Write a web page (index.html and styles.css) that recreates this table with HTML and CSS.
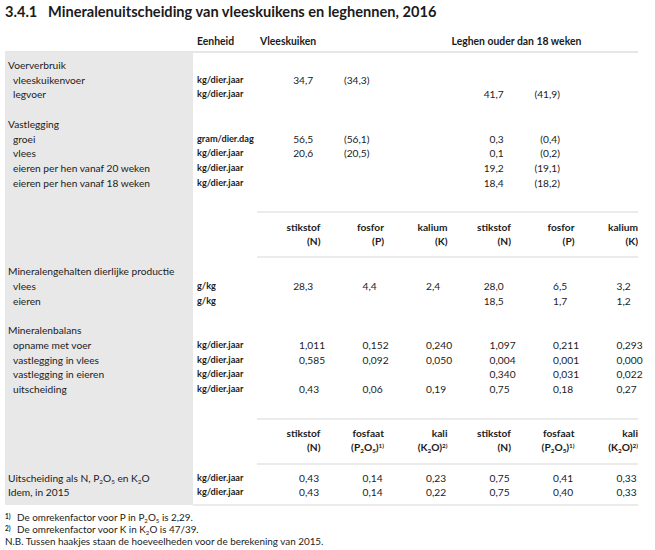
FILE: index.html
```
<!DOCTYPE html>
<html lang="nl">
<head>
<meta charset="utf-8">
<title>Mineralenuitscheiding</title>
<link rel="stylesheet" href="styles.css">
</head>
<body>
<div class="page">
  <h1 class="title"><span class="num">3.4.1</span>Mineralenuitscheiding van vleeskuikens en leghennen, 2016</h1>
  <table class="t">
    <colgroup>
      <col class="w-label"><col class="w-unit">
      <col class="w-d"><col class="w-d"><col class="w-d"><col class="w-d"><col class="w-d"><col class="w-d">
    </colgroup>
    <thead>
      <tr class="top">
        <th></th>
        <th class="th-unit">Eenheid</th>
        <th class="th-grp" colspan="3">Vleeskuiken</th>
        <th class="th-grp2" colspan="3">Leghen ouder dan 18 weken</th>
      </tr>
    </thead>
    <tbody>
      <tr class="sp6"><td class="lb"></td><td colspan="7"></td></tr>
      <tr><td class="lb">Voerverbruik</td><td></td><td></td><td></td><td></td><td></td><td></td><td></td></tr>
      <tr><td class="lb in">vleeskuikenvoer</td><td class="u">kg/dier.jaar</td><td class="n"><span class="i">34</span>,7</td><td class="n p"><span class="i">(34</span>,3)</td><td></td><td></td><td></td><td></td></tr>
      <tr><td class="lb in">legvoer</td><td class="u">kg/dier.jaar</td><td></td><td></td><td></td><td class="n"><span class="i">41</span>,7</td><td class="n p"><span class="i">(41</span>,9)</td><td></td></tr>
      <tr><td class="lb"></td><td colspan="7"></td></tr>
      <tr><td class="lb">Vastlegging</td><td colspan="7"></td></tr>
      <tr><td class="lb in">groei</td><td class="u">gram/dier.dag</td><td class="n"><span class="i">56</span>,5</td><td class="n p"><span class="i">(56</span>,1)</td><td></td><td class="n"><span class="i">0</span>,3</td><td class="n p"><span class="i">(0</span>,4)</td><td></td></tr>
      <tr><td class="lb in">vlees</td><td class="u">kg/dier.jaar</td><td class="n"><span class="i">20</span>,6</td><td class="n p"><span class="i">(20</span>,5)</td><td></td><td class="n"><span class="i">0</span>,1</td><td class="n p"><span class="i">(0</span>,2)</td><td></td></tr>
      <tr><td class="lb in">eieren per hen vanaf 20 weken</td><td class="u">kg/dier.jaar</td><td></td><td></td><td></td><td class="n"><span class="i">19</span>,2</td><td class="n p"><span class="i">(19</span>,1)</td><td></td></tr>
      <tr><td class="lb in">eieren per hen vanaf 18 weken</td><td class="u">kg/dier.jaar</td><td></td><td></td><td></td><td class="n"><span class="i">18</span>,4</td><td class="n p"><span class="i">(18</span>,2)</td><td></td></tr>
      <tr class="gap"><td class="lb"></td><td colspan="7"></td></tr>

      <tr class="sh">
        <td class="lb"></td><td></td>
        <td class="h">stikstof<br>(N)</td>
        <td class="h">fosfor<br>(P)</td>
        <td class="h">kalium<br>(K)</td>
        <td class="h">stikstof<br>(N)</td>
        <td class="h">fosfor<br>(P)</td>
        <td class="h">kalium<br>(K)</td>
      </tr>
      <tr class="sp7"><td class="lb"></td><td colspan="7"></td></tr>
      <tr><td class="lb">Mineralengehalten dierlijke productie</td><td colspan="7"></td></tr>
      <tr><td class="lb in">vlees</td><td class="u">g/kg</td><td class="n"><span class="i">28</span>,3</td><td class="n"><span class="i">4</span>,4</td><td class="n"><span class="i">2</span>,4</td><td class="n"><span class="i">28</span>,0</td><td class="n"><span class="i">6</span>,5</td><td class="n"><span class="i">3</span>,2</td></tr>
      <tr><td class="lb in">eieren</td><td class="u">g/kg</td><td></td><td></td><td></td><td class="n"><span class="i">18</span>,5</td><td class="n"><span class="i">1</span>,7</td><td class="n"><span class="i">1</span>,2</td></tr>
      <tr><td class="lb"></td><td colspan="7"></td></tr>
      <tr><td class="lb">Mineralenbalans</td><td colspan="7"></td></tr>
      <tr><td class="lb in">opname met voer</td><td class="u">kg/dier.jaar</td><td class="n"><span class="i">1</span>,011</td><td class="n"><span class="i">0</span>,152</td><td class="n"><span class="i">0</span>,240</td><td class="n"><span class="i">1</span>,097</td><td class="n"><span class="i">0</span>,211</td><td class="n"><span class="i">0</span>,293</td></tr>
      <tr><td class="lb in">vastlegging in vlees</td><td class="u">kg/dier.jaar</td><td class="n"><span class="i">0</span>,585</td><td class="n"><span class="i">0</span>,092</td><td class="n"><span class="i">0</span>,050</td><td class="n"><span class="i">0</span>,004</td><td class="n"><span class="i">0</span>,001</td><td class="n"><span class="i">0</span>,000</td></tr>
      <tr><td class="lb in">vastlegging in eieren</td><td class="u">kg/dier.jaar</td><td></td><td></td><td></td><td class="n"><span class="i">0</span>,340</td><td class="n"><span class="i">0</span>,031</td><td class="n"><span class="i">0</span>,022</td></tr>
      <tr><td class="lb in">uitscheiding</td><td class="u">kg/dier.jaar</td><td class="n"><span class="i">0</span>,43</td><td class="n"><span class="i">0</span>,06</td><td class="n"><span class="i">0</span>,19</td><td class="n"><span class="i">0</span>,75</td><td class="n"><span class="i">0</span>,18</td><td class="n"><span class="i">0</span>,27</td></tr>
      <tr class="gap"><td class="lb"></td><td colspan="7"></td></tr>

      <tr class="sh">
        <td class="lb"></td><td></td>
        <td class="h">stikstof<br>(N)</td>
        <td class="h">fosfaat<br>(P<sub>2</sub>O<sub>5</sub>)<sup>1)</sup></td>
        <td class="h">kali<br>(K<sub>2</sub>O)<sup>2)</sup></td>
        <td class="h">stikstof<br>(N)</td>
        <td class="h">fosfaat<br>(P<sub>2</sub>O<sub>5</sub>)<sup>1)</sup></td>
        <td class="h">kali<br>(K<sub>2</sub>O)<sup>2)</sup></td>
      </tr>
      <tr class="sp7"><td class="lb"></td><td colspan="7"></td></tr>
      <tr><td class="lb">Uitscheiding als N, P<sub>2</sub>O<sub>5</sub> en K<sub>2</sub>O</td><td class="u">kg/dier.jaar</td><td class="n"><span class="i">0</span>,43</td><td class="n"><span class="i">0</span>,14</td><td class="n"><span class="i">0</span>,23</td><td class="n"><span class="i">0</span>,75</td><td class="n"><span class="i">0</span>,41</td><td class="n"><span class="i">0</span>,33</td></tr>
      <tr class="last"><td class="lb">Idem, in 2015</td><td class="u">kg/dier.jaar</td><td class="n"><span class="i">0</span>,43</td><td class="n"><span class="i">0</span>,14</td><td class="n"><span class="i">0</span>,22</td><td class="n"><span class="i">0</span>,75</td><td class="n"><span class="i">0</span>,40</td><td class="n"><span class="i">0</span>,33</td></tr>
    </tbody>
  </table>
  <div class="notes">
    <p><span class="fm">1)</span>De omrekenfactor voor P in P<sub>2</sub>O<sub>5</sub> is 2,29.</p>
    <p><span class="fm">2)</span>De omrekenfactor voor K in K<sub>2</sub>O is 47/39.</p>
    <p>N.B. Tussen haakjes staan de hoeveelheden voor de berekening van 2015.</p>
  </div>
</div>
</body>
</html>
```
FILE: styles.css
```
* { box-sizing: border-box; }
html, body { margin: 0; padding: 0; background: #fff; }
body {
  font-family: "Lato", "Liberation Sans", sans-serif;
  color: #1b1b1b;
  font-size: 10.2px;
}
.page { padding: 4px 0 0 5px; width: 655px; }
.title {
  margin: 0;
  font-size: 14.6px;
  font-weight: 700;
  line-height: 16px;
  height: 28px;
}
.title .num { display: inline-block; width: 43px; }

.t {
  border-collapse: collapse;
  table-layout: fixed;
  width: 633px;
}
.w-label { width: 188px; }
.w-unit { width: 64px; }
.w-d { width: 63.5px; }

.t td, .t th {
  padding: 0;
  line-height: 14.7px;
  height: 14.7px;
  white-space: nowrap;
  vertical-align: middle;
}
.top th {
  font-weight: 700;
  text-align: left;
  height: 20px;
  vertical-align: top;
  padding-top: 2px;
  border-bottom: 2px solid #e6e6e6;
  font-size: 10.4px;
}
.th-unit { padding-left: 4px !important; }
.th-grp { padding-left: 3px !important; }
.th-grp2 { padding-left: 4px !important; }

.lb { background: #e8e8e8; padding-left: 3px !important; }
.lb.in { padding-left: 8px !important; }
.u { font-weight: 700; padding-left: 4px !important; font-size: 9.2px; }

.n { text-align: left; padding-left: 34px !important; }
.n .i { display: inline-block; width: 14px; text-align: right; }
.n.p { padding-left: 20px !important; }
.n.p .i { width: 18px; }

.sp6 td { height: 6px; line-height: 6px; }
.sp7 td { height: 7px; line-height: 7px; }
.gap td { height: 22px; line-height: 22px; }

.sh td { height: 45px; }
.sh .h {
  font-weight: 700;
  text-align: right;
  line-height: 13.7px;
  border-top: 2px solid #ebebeb;
  border-bottom: 2px solid #ebebeb;
}
.sh .h:nth-child(3) { box-shadow: inset 4px 0 0 #fff; }

sub, sup { font-size: 0.62em; line-height: 0; }
sub { vertical-align: -0.35em; }
sup { vertical-align: 0.55em; }

.last td { height: 19px; padding-bottom: 4px; vertical-align: top; padding-top: 0; }
.last td:not(.lb) { border-bottom: 2px solid #ebebeb; }

.notes { margin-top: 5px; font-size: 9.9px; }
.notes p { margin: 0; line-height: 12px; }
.fm { display: inline-block; width: 12px; font-weight: 700; font-size: 6.5px; vertical-align: 2px; line-height: 0; }
```
